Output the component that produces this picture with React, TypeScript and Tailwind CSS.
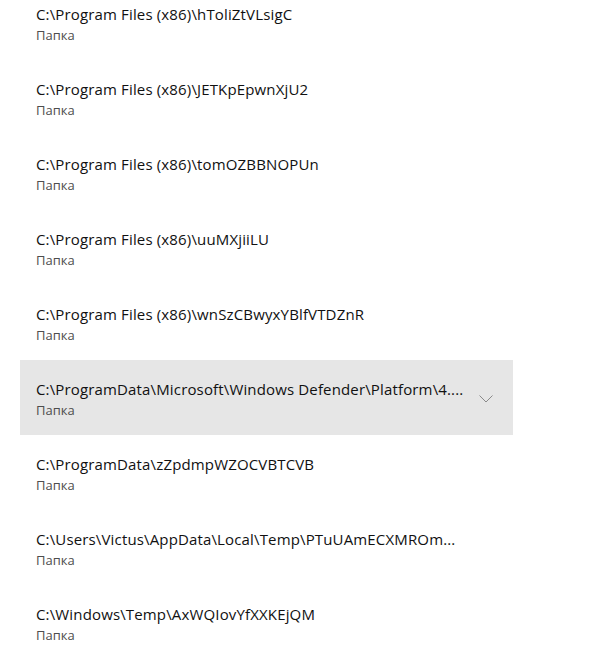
import React from "react";

const rows = [
  "C:\\Program Files (x86)\\hToliZtVLsigC",
  "C:\\Program Files (x86)\\JETKpEpwnXjU2",
  "C:\\Program Files (x86)\\tomOZBBNOPUn",
  "C:\\Program Files (x86)\\uuMXjiiLU",
  "C:\\Program Files (x86)\\wnSzCBwyxYBlfVTDZnR",
  "C:\\ProgramData\\Microsoft\\Windows Defender\\Platform\\4....",
  "C:\\ProgramData\\zZpdmpWZOCVBTCVB",
  "C:\\Users\\Victus\\AppData\\Local\\Temp\\PTuUAmECXMROm...",
  "C:\\Windows\\Temp\\AxWQIovYfXXKEjQM",
];

export default function App() {
  return (
    <div
      className="w-[600px] h-[660px] overflow-hidden bg-white"
      style={{ fontFamily: '"Open Sans", "Noto Sans", sans-serif' }}
    >
      <div className="-mt-[15px] pl-[20px] w-[513px]">
        {rows.map((r, i) => {
          const active = i === 5;
          return (
            <div
              key={i}
              className={`flex items-center h-[75px] pl-4 pr-5 ${active ? "bg-[#e6e6e6]" : ""}`}
            >
              <div className="flex-1 pt-[1px]">
                <div className="text-[15px] leading-[20px] text-[#111] tracking-[0.15px]">{r}</div>
                <div className="text-[13px] leading-[16px] mt-[3px] text-[#4d4d4d]">Папка</div>
              </div>
              {active && (
                <svg width="14" height="8" viewBox="0 0 14 8" className="mt-[2px]">
                  <path d="M0.5 0.5 L7 7 L13.5 0.5" fill="none" stroke="#8a8a8a" strokeWidth="1" />
                </svg>
              )}
            </div>
          );
        })}
      </div>
    </div>
  );
}
